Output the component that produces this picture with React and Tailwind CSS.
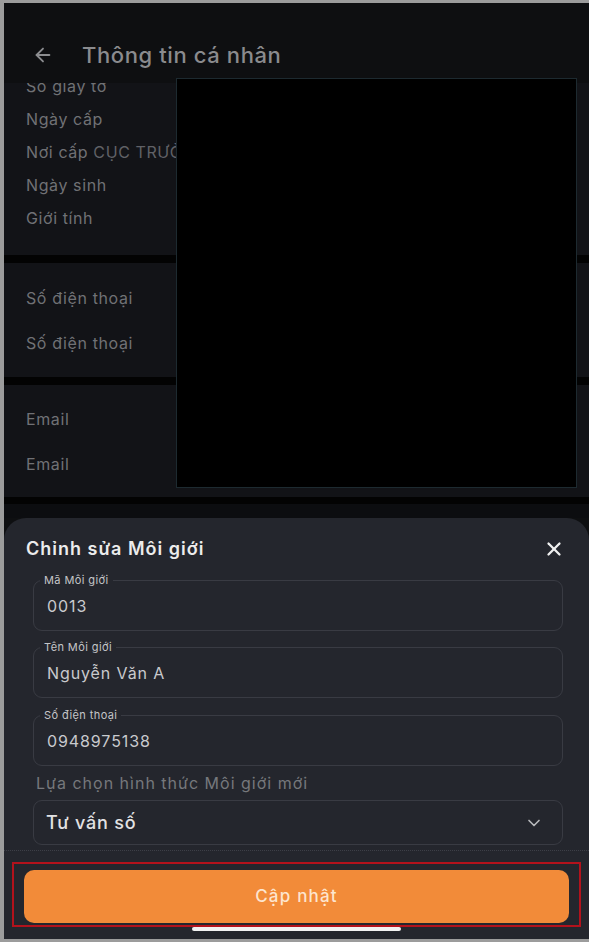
import React from 'react';
import { ArrowLeft, X, ChevronDown } from 'lucide-react';

const Row = ({ children, h = 'h-[33px]' }) => (
    <div className={`${h} flex items-center px-[22px] text-[16px] tracking-[0.6px] text-[#707175]`}>{children}</div>
);

const Field = ({ label, value }) => (
    <div className="relative h-[51px] rounded-[9px] border border-[#393b43] flex items-center px-[13px]">
        <span className="absolute -top-[8px] left-[6px] px-[4px] bg-[#24262d] text-[11px] leading-[14px] tracking-[0.4px] text-[#c4c5c8]">
            {label}
        </span>
        <span className="text-[16px] text-[#c9cacd] tracking-[0.9px]">{value}</span>
    </div>
);

const App = () => {
    return (
        <div
            className="relative w-[589px] h-[942px] overflow-hidden bg-[#0e0f11] border-l-[4px] border-t-[3px] border-b-[3px] border-[#9c9c9c]"
            style={{ fontFamily: 'Inter, "Noto Sans", sans-serif' }}
        >
            {/* Header */}
            <div className="h-[80px] flex items-end pb-[15px] pl-[28px] gap-[28px] bg-[#0e0f11]">
                <ArrowLeft className="w-[22px] h-[22px] text-[#8c8d90] mb-[2px]" strokeWidth={2} />
                <span className="text-[22px] font-medium tracking-[0.6px] text-[#8a8b8e] leading-[26px]">Thông tin cá nhân</span>
            </div>

            {/* Background page content */}
            <div className="h-[435px] overflow-hidden bg-[#030303]">
                <div className="-mt-[14px] flex flex-col">
                    <div className="bg-[#121317] pb-[21px]">
                        <Row>Số giấy tờ</Row>
                        <Row>Ngày cấp</Row>
                        <Row>
                            Nơi cấp&nbsp;<span className="text-[#606166]">CỤC TRƯỞNG</span>
                        </Row>
                        <Row>Ngày sinh</Row>
                        <Row>Giới tính</Row>
                    </div>
                    <div className="h-[8px]" />
                    <div className="bg-[#121317] py-[12px]">
                        <Row h="h-[45px]">Số điện thoại</Row>
                        <Row h="h-[45px]">Số điện thoại</Row>
                    </div>
                    <div className="h-[8px]" />
                    <div className="bg-[#121317] py-[11px]">
                        <Row h="h-[45px]">Email</Row>
                        <Row h="h-[45px]">Email</Row>
                    </div>
                    <div className="h-[7px]" />
                    <div className="bg-[#0c0d10] h-[40px]" />
                </div>
            </div>

            {/* Redacted block */}
            <div className="absolute left-[172px] top-[75px] w-[401px] h-[410px] bg-black border border-[#1d2a30]" />

            {/* Bottom sheet */}
            <div className="absolute left-0 right-0 bottom-0 h-[421px] bg-[#24262d] rounded-t-[22px] flex flex-col">
                <div className="flex items-center justify-between pl-[22px] pr-[24px] pt-[17px]">
                    <span className="text-[18px] font-semibold tracking-[1px] text-[#ececec]">Chỉnh sửa Môi giới</span>
                    <X className="w-[22px] h-[22px] text-[#f0f0f0]" strokeWidth={2.5} />
                </div>

                <div className="flex flex-col pl-[29px] pr-[26px] mt-[18px]">
                    <Field label="Mã Môi giới" value="0013" />
                    <div className="h-[16px]" />
                    <Field label="Tên Môi giới" value="Nguyễn Văn A" />
                    <div className="h-[17px]" />
                    <Field label="Số điện thoại" value="0948975138" />
                    <div className="mt-[5px] pl-[3px] text-[16px] tracking-[1px] text-[#76787c]">Lựa chọn hình thức Môi giới mới</div>
                    <div className="mt-[5px] h-[45px] rounded-[9px] border border-[#393b43] flex items-center justify-between pl-[12px] pr-[18px]">
                        <span className="text-[18px] font-medium tracking-[0.8px] text-[#e2e2e4]">Tư vấn số</span>
                        <ChevronDown className="w-[20px] h-[20px] text-[#b8b9bc]" strokeWidth={2} />
                    </div>
                </div>

                <div className="mt-[5px] border-t border-dotted border-[#3d3f47]" />

                <div className="mt-[11px] mx-[8px] border-[2px] border-[#b3121c] px-[10px] pt-[6px] pb-[2px]">
                    <button className="w-full h-[53px] rounded-[10px] bg-[#f28b39] text-[17px] font-medium tracking-[1.2px] text-[#fde5cf]">
                        Cập nhật
                    </button>
                </div>
                <div className="mx-auto w-[209px] h-[4px] rounded-full bg-[#f2f2f2]" />
            </div>
        </div>
    );
};

export default App;
